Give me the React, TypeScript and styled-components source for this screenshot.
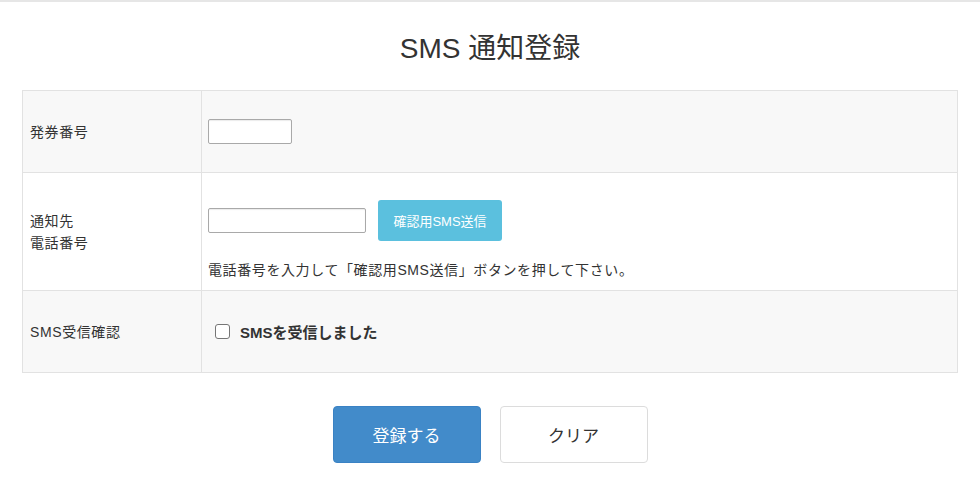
import styled, { createGlobalStyle } from "styled-components";

const GlobalStyle = createGlobalStyle`
  html, body {
    margin: 0;
    padding: 0;
    background: #fff;
  }
  body {
    font-family: "Liberation Sans", "Noto Sans CJK JP", sans-serif;
    color: #333;
    font-size: 14px;
  }
`;

const Page = styled.div`
  border-top: 2px solid #e6e6e6;
  padding: 0 22px;
`;

const Title = styled.h1`
  margin: 32px 0 26px;
  font-size: 28px;
  line-height: 30px;
  font-weight: normal;
  text-align: center;
  color: #333;
`;

const FormTable = styled.div`
  display: grid;
  grid-template-columns: 179px 1fr;
  border: 1px solid #e2e2e2;
  border-bottom: none;
`;

const LabelCell = styled.div<{ $striped: boolean; $h: number }>`
  height: ${(p) => p.$h}px;
  box-sizing: border-box;
  background: ${(p) => (p.$striped ? "#f8f8f8" : "#fff")};
  border-right: 1px solid #e2e2e2;
  border-bottom: 1px solid #e2e2e2;
  padding: 0 7px;
  display: flex;
  align-items: center;
  font-size: 14px;
  letter-spacing: 0.6px;
  line-height: 22px;
`;

const ValueCell = styled.div<{ $striped: boolean; $h: number }>`
  height: ${(p) => p.$h}px;
  box-sizing: border-box;
  background: ${(p) => (p.$striped ? "#f8f8f8" : "#fff")};
  border-bottom: 1px solid #e2e2e2;
  padding: 0 6px;
  display: flex;
  flex-direction: column;
  justify-content: center;
`;

const PhoneCell = styled(ValueCell)`
  justify-content: flex-start;
  padding-top: 27px;
`;

const TextInput = styled.input<{ $w: number }>`
  width: ${(p) => p.$w}px;
  height: 25px;
  box-sizing: border-box;
  border: 1px solid #a9a9a9;
  border-radius: 2px;
  background: #fff;
  box-shadow: inset 0 1px 1px rgba(0, 0, 0, 0.08);
  padding: 2px 4px;
  font-size: 13px;
`;

const InputRow = styled.div`
  display: flex;
  align-items: center;
  gap: 12px;
`;

const InfoButton = styled.button`
  width: 124px;
  height: 41px;
  border: none;
  border-radius: 3px;
  background: #5bc0de;
  color: #fff;
  font-family: inherit;
  font-size: 13px;
  cursor: pointer;
`;

const Help = styled.p`
  margin: 19px 0 0;
  font-size: 14px;
  letter-spacing: 0.6px;
  line-height: 20px;
`;

const CheckLabel = styled.label`
  display: flex;
  align-items: center;
  gap: 10px;
  padding-left: 7px;
  font-size: 15px;
  font-weight: bold;
`;

const CheckBox = styled.input`
  width: 15px;
  height: 15px;
  margin: 0;
  appearance: none;
  border: 1px solid #767676;
  border-radius: 3px;
  background: #fff;
`;

const Actions = styled.div`
  display: flex;
  justify-content: center;
  gap: 19px;
  margin-top: 33px;
`;

const ActionButton = styled.button<{ $primary?: boolean }>`
  width: 148px;
  height: 57px;
  box-sizing: border-box;
  border-radius: 4px;
  border: 1px solid ${(p) => (p.$primary ? "#3a82c4" : "#dcdcdc")};
  background: ${(p) => (p.$primary ? "#428bca" : "#fff")};
  color: ${(p) => (p.$primary ? "#fff" : "#333")};
  font-family: inherit;
  font-size: 17px;
  cursor: pointer;
`;

export default function App() {
  return (
    <Page>
      <GlobalStyle />
      <Title>SMS 通知登録</Title>
      <FormTable>
        <LabelCell $striped $h={82}>発券番号</LabelCell>
        <ValueCell $striped $h={82}>
          <TextInput $w={84} type="text" />
        </ValueCell>

        <LabelCell $striped={false} $h={118}>
          通知先
          <br />
          電話番号
        </LabelCell>
        <PhoneCell $striped={false} $h={118}>
          <InputRow>
            <TextInput $w={158} type="tel" />
            <InfoButton>確認用SMS送信</InfoButton>
          </InputRow>
          <Help>電話番号を入力して「確認用SMS送信」ボタンを押して下さい。</Help>
        </PhoneCell>

        <LabelCell $striped $h={82}>SMS受信確認</LabelCell>
        <ValueCell $striped $h={82}>
          <CheckLabel>
            <CheckBox type="checkbox" />
            SMSを受信しました
          </CheckLabel>
        </ValueCell>
      </FormTable>
      <Actions>
        <ActionButton $primary>登録する</ActionButton>
        <ActionButton>クリア</ActionButton>
      </Actions>
    </Page>
  );
}
